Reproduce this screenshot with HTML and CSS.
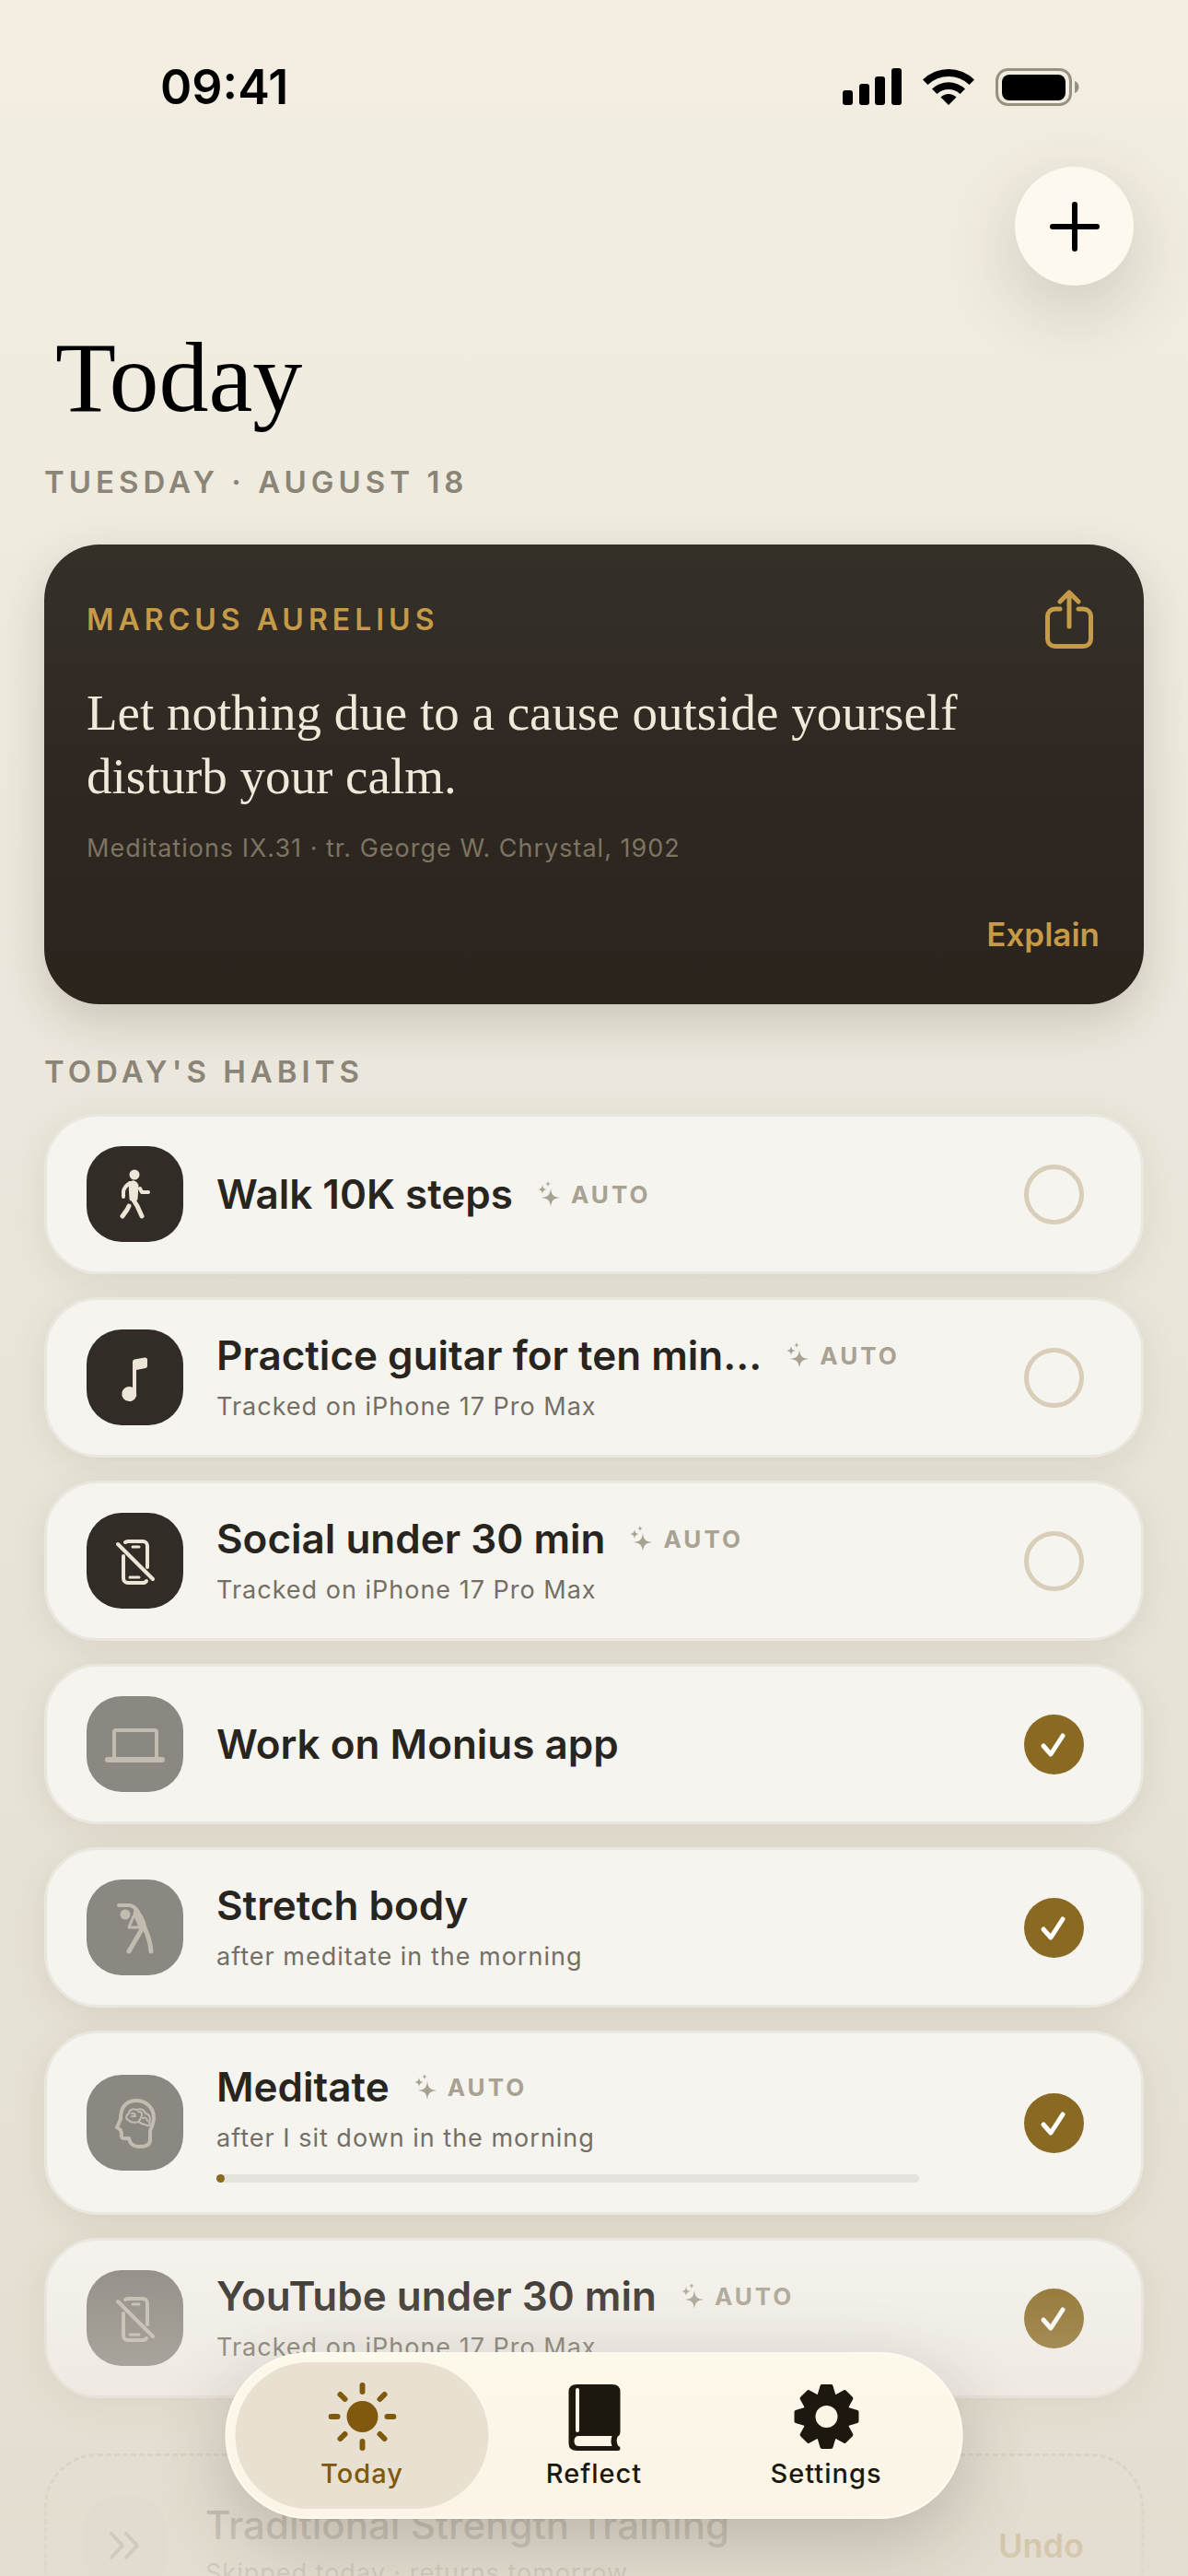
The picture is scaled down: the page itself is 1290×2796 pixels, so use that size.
FILE: index.html
```html
<!DOCTYPE html>
<html lang="en">
  <head>
    <meta charset="UTF-8">
    <meta name="viewport" content="width=device-width, initial-scale=1.0">
    <title>Today</title>
    <link rel="stylesheet" href="styles.css">
  </head>
  <body>
    <!-- shared icons -->
    <svg class="sprite" aria-hidden="true">
      <symbol id="sparkles" viewBox="0 0 24 28">
        <path d="M14 8c1 7 2.500 9 10 10-7.500 1-9 3-10 10-1-7-2.500-9-10-10 7.500-1 9-3 10-10z"/>
        <path d="M5 4c.7 3.700 1.500 4.500 5 5-3.500.5-4.300 1.500-5 5-.7-3.500-1.500-4.500-5-5 3.500-.5 4.300-1.500 5-5z"/>
        <path d="M11 0c.4 2.200 1 2.800 3 3-2 .3-2.600 1-3 3-.4-2-1-2.700-3-3 2-.2 2.600-1 3-3z"/>
      </symbol>
      <symbol id="phone-off" viewBox="0 0 105 105">
        <g fill="none" stroke="currentColor" stroke-width="4" stroke-linecap="round" stroke-linejoin="round">
          <path d="M42 32q1-1 3-1h16a5 5 0 0 1 5 5v23M40 47v24a5 5 0 0 0 5 5h16q3 0 4-2"/>
          <path d="M50 37h7M47 70h10" stroke-width="3"/>
          <path d="M34 34l38 38"/>
        </g>
      </symbol>
    </svg>

    <div class="screen">
      <header class="status-bar">
        <time>09:41</time>
        <div class="status-icons">
          <svg width="64" height="42" viewBox="0 0 64 42">
            <rect x="0" y="24" width="11" height="16" rx="3"/>
            <rect x="18" y="17" width="11" height="23" rx="3"/>
            <rect x="35" y="9" width="11" height="31" rx="3"/>
            <rect x="53" y="0" width="11" height="40" rx="3"/>
          </svg>
          <svg width="58" height="42" viewBox="0 0 58 42">
            <path d="M1 12.500a40 40 0 0 1 56 0l-5.500 5.500a32.500 32.500 0 0 0-45 0z"/>
            <path d="M11 22.500a26 26 0 0 1 36 0l-5.500 5.500a18 18 0 0 0-25 0z"/>
            <path d="M20.500 31.500a12 12 0 0 1 17 0L29 40z"/>
          </svg>
          <svg width="92" height="42" viewBox="0 0 92 42">
            <rect x="1.500" y="1.500" width="80" height="38" rx="12" fill="none" stroke="#969181" stroke-width="3"/>
            <rect x="7" y="7" width="69" height="28" rx="8"/>
            <path d="M86 14c6 2 6 11 0 13z" fill="#969181"/>
          </svg>
        </div>
      </header>

      <main class="content">
        <div class="toolbar">
          <button class="add-button" type="button" aria-label="Add habit">
            <svg width="56" height="56" viewBox="0 0 56 56" fill="none" stroke="#000" stroke-width="6" stroke-linecap="round"><path d="M28 4v48M4 28h48"/></svg>
          </button>
        </div>
        <h1>Today</h1>
        <p class="section-label">Tuesday · August 18</p>

        <section class="quote-card">
          <div class="quote-head">
            <span class="quote-author">Marcus Aurelius</span>
            <button class="share-button" type="button" aria-label="Share">
              <svg width="52" height="64" viewBox="0 0 52 64" fill="none" stroke="currentColor" stroke-width="5" stroke-linecap="round" stroke-linejoin="round">
                <path d="M16 21h-5.500a8 8 0 0 0-8 8v24.500a8 8 0 0 0 8 8h31a8 8 0 0 0 8-8V29a8 8 0 0 0-8-8H36"/>
                <path d="M26 40V4M16 13L26 3l10 10"/>
              </svg>
            </button>
          </div>
          <blockquote>Let nothing due to a cause outside yourself disturb your calm.</blockquote>
          <p class="quote-source">Meditations IX.31 · tr. George W. Chrystal, 1902</p>
          <button class="explain-button" type="button">Explain</button>
        </section>

        <h2 class="section-label">Today's habits</h2>

        <ul class="habits">
          <li class="habit">
            <span class="tile">
              <svg viewBox="0 0 105 105" fill="none" stroke="currentColor" stroke-width="5" stroke-linecap="round" stroke-linejoin="round">
                <circle cx="52" cy="31" r="5.500" fill="currentColor" stroke="none"/>
                <path d="M48 41q4-3 6 2l-1 14-4 0z" fill="currentColor"/>
                <path d="M47 40q-6 4-7 9v6" stroke-width="4"/>
                <path d="M58 46l2 4h7" stroke-width="4"/>
                <path d="M50 57l5 8 5 11M46 65l-2 4-5 7"/>
              </svg>
            </span>
            <div class="habit-body">
              <div class="habit-line">
                <label class="habit-title" for="h1">Walk 10K steps</label>
                <span class="auto"><svg><use href="#sparkles"/></svg>Auto</span>
              </div>
            </div>
            <input class="check" type="checkbox" id="h1">
          </li>
          <li class="habit">
            <span class="tile">
              <svg viewBox="0 0 105 105" fill="currentColor">
                <path d="M50 35q0-2 2-2.500l11-2q3 0 3 2v7q0 2-2 2.500L54 44v24a8 8 0 1 1-4-5z"/>
              </svg>
            </span>
            <div class="habit-body">
              <div class="habit-line">
                <label class="habit-title" for="h2">Practice guitar for ten min...</label>
                <span class="auto"><svg><use href="#sparkles"/></svg>Auto</span>
              </div>
              <p class="habit-note">Tracked on iPhone 17 Pro Max</p>
            </div>
            <input class="check" type="checkbox" id="h2">
          </li>
          <li class="habit">
            <span class="tile"><svg><use href="#phone-off"/></svg></span>
            <div class="habit-body">
              <div class="habit-line">
                <label class="habit-title" for="h3">Social under 30 min</label>
                <span class="auto"><svg><use href="#sparkles"/></svg>Auto</span>
              </div>
              <p class="habit-note">Tracked on iPhone 17 Pro Max</p>
            </div>
            <input class="check" type="checkbox" id="h3">
          </li>
          <li class="habit done">
            <span class="tile">
              <svg viewBox="0 0 105 105" fill="none" stroke="currentColor" stroke-width="4" stroke-linecap="round" stroke-linejoin="round">
                <rect x="30" y="37" width="46" height="31" rx="2"/>
                <path d="M23 69h59" stroke-width="6"/>
              </svg>
            </span>
            <div class="habit-body">
              <div class="habit-line">
                <label class="habit-title" for="h4">Work on Monius app</label>
              </div>
            </div>
            <input class="check" type="checkbox" id="h4" checked>
          </li>
          <li class="habit done">
            <span class="tile">
              <svg viewBox="0 0 105 105" fill="none" stroke="currentColor" stroke-width="5" stroke-linecap="round" stroke-linejoin="round">
                <circle cx="42" cy="38" r="5.500" fill="currentColor" stroke="none"/>
                <path d="M35 28h12q5 1 9 7" stroke-width="4"/>
                <path d="M53 32q8 7 11 20l-5 2-7-16z" fill="currentColor" stroke-width="3"/>
                <path d="M51 40l-5 12h13" stroke-width="3"/>
                <path d="M62 51q7 13 8 27M60 54L46 78"/>
              </svg>
            </span>
            <div class="habit-body">
              <div class="habit-line">
                <label class="habit-title" for="h5">Stretch body</label>
              </div>
              <p class="habit-note">after meditate in the morning</p>
            </div>
            <input class="check" type="checkbox" id="h5" checked>
          </li>
          <li class="habit done">
            <span class="tile">
              <svg viewBox="0 0 105 105" fill="none" stroke="currentColor" stroke-width="4" stroke-linecap="round" stroke-linejoin="round">
                <path d="M46 69h-5q-4 0-3-5l-1-4-4-3 4-9c0-13 6-20 17-20s19 8 19 19c0 7-3 10-4 14v10c0 5-5 7-12 7s-10-3-11-9z"/>
                <path stroke-width="2" d="M45 49c-3-2-2-6 1-7 0-4 5-6 8-4 5-2 9 0 10 4 5 1 6 6 4 9 2 3-1 6-4 3-3 0-5-1-7-3-4 1-9 1-12-2zM49 42q4-1 4 3h-4M56 40q5 0 4 4t-3 6M61 47q4-2 5 3"/>
              </svg>
            </span>
            <div class="habit-body">
              <div class="habit-line">
                <label class="habit-title" for="h6">Meditate</label>
                <span class="auto"><svg><use href="#sparkles"/></svg>Auto</span>
              </div>
              <p class="habit-note">after I sit down in the morning</p>
              <div class="progress"><span style="width: 1%"></span></div>
            </div>
            <input class="check" type="checkbox" id="h6" checked>
          </li>
          <li class="habit done">
            <span class="tile"><svg><use href="#phone-off"/></svg></span>
            <div class="habit-body">
              <div class="habit-line">
                <label class="habit-title" for="h7">YouTube under 30 min</label>
                <span class="auto"><svg><use href="#sparkles"/></svg>Auto</span>
              </div>
              <p class="habit-note">Tracked on iPhone 17 Pro Max</p>
            </div>
            <input class="check" type="checkbox" id="h7" checked>
          </li>
        </ul>

        <div class="skipped">
          <span class="skipped-tile">
            <svg width="36" height="32" viewBox="0 0 36 32" fill="none" stroke="currentColor" stroke-width="4" stroke-linecap="round" stroke-linejoin="round"><path d="M3 3l12 13L3 29M19 3l12 13-12 13"/></svg>
          </span>
          <div class="habit-body">
            <p class="skipped-title">Traditional Strength Training</p>
            <p class="habit-note">Skipped today · returns tomorrow</p>
          </div>
          <button class="undo-button" type="button">Undo</button>
        </div>
      </main>

      <div class="fade"></div>

      <nav class="tab-bar">
        <a class="tab active" href="#today">
          <svg width="74" height="74" viewBox="0 0 74 74" fill="currentColor" stroke="currentColor" stroke-width="6" stroke-linecap="round">
            <circle cx="37" cy="37" r="17" stroke="none"/>
            <path d="M37 3v7M37 64v7M3 37h7M64 37h7M13 13l5 5M56 56l5 5M13 61l5-5M56 18l5-5"/>
          </svg>
          Today
        </a>
        <a class="tab" href="#reflect">
          <svg width="74" height="74" viewBox="0 0 74 74" fill="currentColor">
            <path fill-rule="evenodd" d="M18 2h38q9 0 9 8v44q0 3-3 5-2 5 1 10 2 0 2 2.500T62 74H18q-9 0-9-8V10q0-8 9-8zM20 58q-5 0-5 5.500t5 5.500h36q-2-5 0-11z"/>
            <path d="M18.500 8v44" stroke="#fbf5e8" stroke-width="4" stroke-linecap="round"/>
          </svg>
          Reflect
        </a>
        <a class="tab" href="#settings">
          <svg width="74" height="74" viewBox="0 0 74 74" fill="currentColor" stroke="currentColor" stroke-width="4" stroke-linejoin="round">
            <circle cx="37" cy="37" r="24"/>
            <path id="tooth" d="M29 14l3-10h10l3 10v46l-3 10H32l-3-10z"/>
            <use href="#tooth" transform="rotate(45 37 37)"/>
            <use href="#tooth" transform="rotate(90 37 37)"/>
            <use href="#tooth" transform="rotate(135 37 37)"/>
            <circle cx="37" cy="37" r="12" fill="#fbf5e8" stroke="none"/>
          </svg>
          Settings
        </a>
      </nav>
    </div>
  </body>
</html>
```
FILE: styles.css
```css
* {
  box-sizing: border-box;
}

body {
  margin: 0;
  font-family: Inter, "Liberation Sans", sans-serif;
  color: #28251f;
}

h1,
h2,
p,
ul,
blockquote {
  margin: 0;
  padding: 0;
}

button {
  border: none;
  padding: 0;
  background: none;
  font-family: inherit;
  cursor: pointer;
}

svg {
  display: block;
}

.sprite {
  position: absolute;
  width: 0;
  height: 0;
}

.screen {
  position: relative;
  height: 100vh;
  overflow: hidden;
  background: linear-gradient(#f4eee2, #f0ece0 14%, #ebe7dc 42%, #e7e3d7 65%, #e5dfd2);
}

/* status bar */
.status-bar {
  display: flex;
  justify-content: space-between;
  align-items: center;
  height: 181px;
  padding: 8px 117px 0 174px;
}

.status-bar time {
  font-size: 52px;
  font-weight: 600;
  color: #000;
}

.status-icons {
  display: flex;
  gap: 22px;
}

.content {
  padding: 0 48px;
}

.toolbar {
  display: flex;
  justify-content: flex-end;
  padding-right: 11px;
}

.add-button {
  display: flex;
  align-items: center;
  justify-content: center;
  width: 129px;
  height: 129px;
  border-radius: 50%;
  background: #fef9ee;
  box-shadow: 0 24px 80px rgba(60, 55, 40, 0.2);
}

h1 {
  padding-left: 12px;
  margin-top: 40px;
  font-family: "Liberation Serif", serif;
  font-size: 108px;
  font-weight: 400;
  line-height: 120px;
  color: #000;
}

.section-label {
  font-size: 33px;
  font-weight: 600;
  line-height: 40px;
  letter-spacing: 5px;
  text-transform: uppercase;
  color: #8b8577;
}

h1 + .section-label {
  margin-top: 33px;
}

/* quote */
.quote-card {
  display: flex;
  flex-direction: column;
  margin: 48px 0 53px;
  padding: 47px 48px 55px 46px;
  border-radius: 60px;
  background: linear-gradient(#343028, #2f2822 50%, #2a241d);
  box-shadow: 0 18px 50px rgba(50, 45, 30, 0.18);
}

.quote-head {
  display: flex;
  justify-content: space-between;
  align-items: center;
  height: 68px;
  padding-right: 7px;
}

.quote-author {
  font-size: 32px;
  font-weight: 600;
  letter-spacing: 5px;
  text-transform: uppercase;
  color: #c59a48;
}

.share-button {
  color: #c59a48;
}

blockquote {
  margin-top: 33px;
  font-family: "Liberation Serif", serif;
  font-size: 55px;
  line-height: 69px;
  color: #f0e9da;
}

.quote-source {
  margin-top: 26px;
  font-size: 27px;
  line-height: 36px;
  letter-spacing: 1px;
  color: #7d7462;
}

.explain-button {
  align-self: flex-end;
  margin-top: 54px;
  font-size: 35px;
  font-weight: 600;
  line-height: 42px;
  color: #c59a48;
}

/* habits */
.habits {
  display: flex;
  flex-direction: column;
  gap: 25px;
  margin-top: 26px;
  list-style: none;
}

.habit {
  display: flex;
  align-items: center;
  padding: 32px 62px 32px 43px;
  border: 3px solid #eae7df;
  border-radius: 58px;
  background: #f6f4ef;
  box-shadow: 0 8px 36px rgba(90, 80, 50, 0.1);
}

.tile {
  flex: none;
  width: 105px;
  height: 104px;
  margin-right: 36px;
  border-radius: 38px;
  background: #322c26;
  color: #ede6d8;
}

.tile svg {
  width: 105px;
  height: 105px;
}

.done .tile {
  background: #8b8881;
  color: #c1bbb0;
}

.habit-body {
  flex: 1;
  min-width: 0;
}

.habit-line {
  display: flex;
  align-items: center;
}

.habit-title {
  font-size: 44px;
  font-weight: 600;
  line-height: 52px;
  white-space: nowrap;
}

.auto {
  display: flex;
  align-items: center;
  gap: 12px;
  margin-left: 27px;
  font-size: 26px;
  font-weight: 700;
  letter-spacing: 3px;
  text-transform: uppercase;
  color: #a8a293;
}

.auto svg {
  width: 24px;
  height: 28px;
  fill: currentColor;
}

.habit-note {
  margin-top: 12px;
  font-size: 27px;
  line-height: 36px;
  letter-spacing: 1px;
  color: #746f65;
}

.progress {
  height: 9px;
  margin: 21px 114px 0 0;
  border-radius: 5px;
  background: #e5e3dc;
}

.progress span {
  display: block;
  min-width: 9px;
  height: 9px;
  border-radius: 5px;
  background: #8a6a22;
}

.check {
  appearance: none;
  flex: none;
  width: 65px;
  height: 65px;
  margin: 0;
  border: 5px solid #d8ceb9;
  border-radius: 50%;
}

.check:checked {
  border: none;
  background: #8a6a22 url("data:image/svg+xml,%3Csvg xmlns='http://www.w3.org/2000/svg' viewBox='0 0 65 65' fill='none' stroke='white' stroke-width='5' stroke-linecap='round' stroke-linejoin='round'%3E%3Cpath d='M21 34l8 9 13-20'/%3E%3C/svg%3E");
}

/* skipped habit */
.skipped {
  display: flex;
  align-items: center;
  margin-top: 60px;
  padding: 44px 62px 32px 40px;
  border: 3px dashed #c9c2b3;
  border-radius: 58px;
  opacity: 0.8;
}

.skipped-tile {
  display: flex;
  align-items: center;
  justify-content: center;
  width: 90px;
  height: 105px;
  margin-right: 42px;
  border-radius: 36px;
  background: #dfd9cd;
  color: #8b8577;
}

.skipped-title {
  font-size: 42px;
  font-weight: 500;
  line-height: 52px;
  color: #746f65;
}

.skipped .habit-note {
  margin-top: 8px;
}

.undo-button {
  font-size: 36px;
  font-weight: 600;
  color: #a07820;
}

.fade {
  position: absolute;
  right: 0;
  bottom: 0;
  left: 0;
  height: 390px;
  background: linear-gradient(rgba(227, 220, 208, 0), rgba(227, 220, 208, 0.4) 50%, rgba(227, 220, 208, 0.65) 80%, rgba(227, 220, 208, 0.8));
}

/* tab bar */
.tab-bar {
  position: absolute;
  bottom: 62px;
  left: 50%;
  display: flex;
  padding: 9px;
  border: 2px solid #fffaf0;
  border-radius: 91px;
  background: linear-gradient(#fcf8ea, #fbf4e7);
  box-shadow: 0 24px 80px rgba(60, 55, 40, 0.24);
  transform: translateX(-50%);
}

.tab {
  display: flex;
  flex-direction: column;
  align-items: center;
  width: 275px;
  height: 159px;
  padding-top: 22px;
  border-radius: 80px;
  font-size: 29px;
  font-weight: 500;
  line-height: 49px;
  letter-spacing: 1px;
  text-decoration: none;
  color: #1d180e;
}

.tab + .tab {
  margin-left: -23px;
}

.tab.active {
  background: #e8e1d2;
  color: #80590f;
}
```
